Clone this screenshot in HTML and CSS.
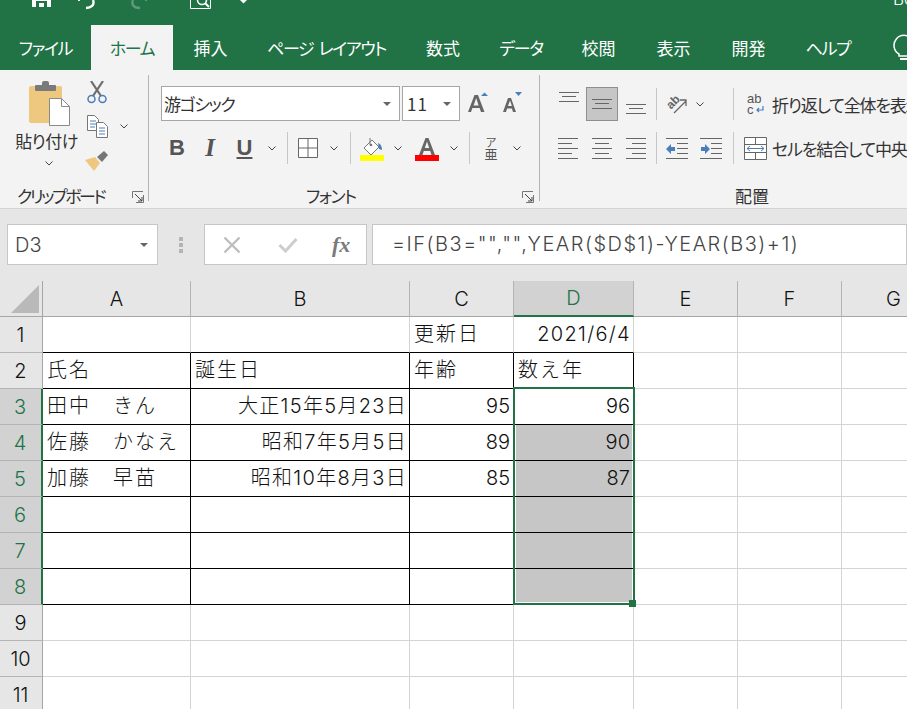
FILE: index.html
```html
<!DOCTYPE html>
<html lang="ja">
<head>
<meta charset="utf-8">
<title>Excel</title>
<link rel="stylesheet" href="styles.css">
</head>
<body>
<div class="app">
  <div class="titlebar">
    <svg class="q q-save" width="19" height="25" viewBox="0 0 19 25"><path d="M0 0h19v7H0z" fill="#fff"/><path d="M4 1h11v6h-3V3H7v4H4z" fill="#217346"/></svg>
    <svg class="q q-undo" width="18" height="25" viewBox="0 0 18 25"><path d="M15 0c2 5-2 8-7 8" fill="none" stroke="#fff" stroke-width="2.400"/><path d="M0 0h2" stroke="#fff" stroke-width="2"/></svg>
    <svg class="q q-redo" width="18" height="25" viewBox="0 0 18 25"><path d="M3 0c-2 5 1 8 7 8" fill="none" stroke="#5d9a7c" stroke-width="2.400"/><path d="M15 0h2" stroke="#5d9a7c" stroke-width="2"/></svg>
    <svg class="q q-prev" width="21" height="25" viewBox="0 0 21 25"><path d="M.5 0v8.500h20V0" fill="none" stroke="#fff"/><circle cx="12" cy="0" r="4.500" fill="none" stroke="#fff" stroke-width="1.600"/><path d="M15 3l4 4" stroke="#fff" stroke-width="2"/></svg>
    <svg class="q q-drop" width="8" height="25" viewBox="0 0 8 25"><path d="M0 0h7L3.500 3.500z" fill="#fff"/></svg>
    <span class="doc">Book1 - Excel</span>
  </div>

  <div class="tabs">
    <div class="tab kana">ファイル</div>
    <div class="tab kana active">ホーム</div>
    <div class="tab">挿入</div>
    <div class="tab kana gapped">ページ レイアウト</div>
    <div class="tab">数式</div>
    <div class="tab kana">データ</div>
    <div class="tab">校閲</div>
    <div class="tab">表示</div>
    <div class="tab">開発</div>
    <div class="tab kana">ヘルプ</div>
    <svg class="bulb" width="37" height="45" viewBox="0 0 37 45"><path d="M29 29A10 10 0 1 1 39 29V31H29Z" fill="none" stroke="#fff" stroke-width="1.500"/><path d="M30 34H38" stroke="#fff" stroke-width="2"/></svg>
  </div>

  <div class="ribbon">
    <section class="group g-clip">
      <div class="clip-body">
        <div class="paste">
          <svg width="41" height="45" viewBox="0 0 41 45"><rect x="0" y="5" width="33" height="37" rx="2" fill="#edc87e"/><rect x="6" y="4" width="21" height="6" rx="1" fill="#7a7a7a"/><rect x="13" y="0" width="7" height="6" rx="2" fill="#7a7a7a"/><path d="M20.500 17.500h12l8 8v19h-20z" fill="#fff" stroke="#8a8a8a"/><path d="M32.500 17.500v8h8" fill="none" stroke="#8a8a8a"/></svg>
          <div class="paste-label">貼り付け</div>
          <svg class="chev paste-chev" width="8" height="5" viewBox="0 0 8 5"><path d="M.5.5L4 4 7.500.5" fill="none" stroke="#444"/></svg>
        </div>
        <div class="clip-tools">
          <svg width="20" height="23" viewBox="0 0 20 23"><path d="M4 0l10 15M16 0L6 15" stroke="#6d6d6d" stroke-width="2.200" fill="none"/><circle cx="4.500" cy="18" r="3.500" fill="none" stroke="#4a7ebb" stroke-width="1.500"/><circle cx="15.500" cy="18" r="3.500" fill="none" stroke="#4a7ebb" stroke-width="1.500"/></svg>
          <span></span>
          <svg width="21" height="23" viewBox="0 0 21 23"><path d="M.5.5h7l4 4v11H.5z" fill="#fff" stroke="#777"/><path d="M9.500 7.500h7l4 4v11h-11z" fill="#fff" stroke="#777"/><path d="M3 6h6M3 9h6M3 12h5" stroke="#4a7ebb"/><path d="M12 13h6M12 16h6M12 19h6" stroke="#4a7ebb"/></svg>
          <svg class="chev" width="8" height="5" viewBox="0 0 8 5"><path d="M.5.5L4 4 7.500.5" fill="none" stroke="#444"/></svg>
          <svg width="24" height="21" viewBox="0 0 24 21"><path d="M0 10l10-3 5 6-6 8z" fill="#edc87e"/><path d="M12 7l7-6 4 4-6 7z" fill="#767676"/></svg>
          <span></span>
        </div>
      </div>
      <div class="glabel"><span class="gname gn-clip">クリップボード</span>
        <svg class="launcher l-clip" width="12" height="12" viewBox="0 0 12 12"><path d="M.5 7V.5H11M11.500 4v7.500H4" fill="none" stroke="#777"/><path d="M3 3l7 7M10 6v4H6" fill="none" stroke="#444"/></svg>
      </div>
    </section>

    <section class="group g-font">
      <div class="font-row1">
        <div class="combo font-name"><span>游ゴシック</span><i class="tri"></i></div>
        <div class="combo font-size"><span>11</span><i class="tri"></i></div>
        <svg width="36" height="35" viewBox="0 0 36 35"><path class="a-shape" d="M8 26L14.500 9h3.500L24.500 26h-3.500l-1.400-4h-7.200L11 26zM13.600 19.500h5L16.200 12z"/><path d="M21 10l3.500-3.500 3.500 3.500z" fill="#4a7ebb"/></svg>
        <svg width="34" height="35" viewBox="0 0 34 35"><path class="a-shape" d="M7 26L12 12h3l5 14h-3l-1.100-3.500h-4.800L10 26zM12 20h3.900L14 14.500z"/><path d="M19 6h7l-3.500 4z" fill="#4a7ebb"/></svg>
      </div>
      <div class="font-row2">
        <span class="fmt f-b">B</span>
        <span class="fmt f-i">I</span>
        <span class="fmt f-u">U</span>
        <svg class="chev" width="8" height="5" viewBox="0 0 8 5"><path d="M.5.5L4 4 7.500.5" fill="none" stroke="#444"/></svg>
        <i class="sep"></i>
        <svg width="20" height="20" viewBox="0 0 20 20"><path d="M.5.500h19v19H.5zM10 .5v19M.5 10h19" fill="#fff" stroke="#666"/></svg>
        <svg class="chev" width="8" height="5" viewBox="0 0 8 5"><path d="M.5.5L4 4 7.500.5" fill="none" stroke="#444"/></svg>
        <i class="sep"></i>
        <svg class="low" width="25" height="25" viewBox="0 0 25 25"><path d="M4 11l8-8 7 7-8 8z" fill="#fff" stroke="#777"/><path d="M10 1v7" stroke="#777"/><circle cx="11" cy="8" r="1.300" fill="#777"/><path d="M18 6c3 1 4 4 4 7l-3-1z" fill="#4a7ebb"/><rect y="18" width="24" height="6" fill="#ffff00"/></svg>
        <svg class="chev" width="8" height="5" viewBox="0 0 8 5"><path d="M.5.5L4 4 7.500.5" fill="none" stroke="#444"/></svg>
        <svg class="low" width="24" height="25" viewBox="0 0 24 25"><path class="a-shape" d="M4 18L10.500 1h3L20 18h-3.500l-1.300-4h-6.400L7.500 18zM9.800 11h4.400L12 4.500z"/><rect y="18" width="24" height="6" fill="#ff0000"/></svg>
        <svg class="chev" width="8" height="5" viewBox="0 0 8 5"><path d="M.5.5L4 4 7.500.5" fill="none" stroke="#444"/></svg>
        <i class="sep"></i>
        <span class="phon"><small>ア</small><b>亜</b></span>
        <svg class="chev" width="8" height="5" viewBox="0 0 8 5"><path d="M.5.5L4 4 7.500.5" fill="none" stroke="#444"/></svg>
      </div>
      <div class="glabel"><span class="gname gn-font">フォント</span>
        <svg class="launcher l-font" width="12" height="12" viewBox="0 0 12 12"><path d="M.5 7V.5H11M11.500 4v7.500H4" fill="none" stroke="#777"/><path d="M3 3l7 7M10 6v4H6" fill="none" stroke="#444"/></svg>
      </div>
    </section>

    <section class="group g-align">
      <div class="align-row1">
        <svg width="20" height="10" viewBox="0 0 20 10" class="a-top"><path d="M0 .5h20M3 4.500h14M0 9.500h20" stroke="#666"/></svg>
        <div class="a-on"><svg width="20" height="10" viewBox="0 0 20 10"><path d="M0 .5h20M3 4.500h14M0 9.500h20" stroke="#666"/></svg></div>
        <svg width="20" height="10" viewBox="0 0 20 10" class="a-bot"><path d="M0 .5h20M3 4.500h14M0 9.500h20" stroke="#666"/></svg>
        <i class="sep short"></i>
        <svg width="22" height="21" viewBox="0 0 22 21"><text class="orient" x="0" y="12" transform="rotate(-45 7 8)">ab</text><path d="M8 19L20 7M14 6h6v6" fill="none" stroke="#666" stroke-width="1.300"/></svg>
        <svg class="chev" width="8" height="5" viewBox="0 0 8 5"><path d="M.5.5L4 4 7.500.5" fill="none" stroke="#444"/></svg>
        <span></span>
        <i class="sep tall"></i>
        <span></span>
        <svg width="20" height="22" viewBox="0 0 20 22"><text class="wrapt" x="1" y="10">ab</text><text class="wrapt" x="1" y="21">c</text><path d="M17 13v4h-6M13 15l-2 2 2 2" fill="none" stroke="#4a7ebb" stroke-width="1.200"/></svg>
        <span class="a-text">折り返して全体を表示する</span>
      </div>
      <div class="align-row2">
        <svg width="20" height="21" viewBox="0 0 20 21"><path d="M0 .5h20M0 5.500h14M0 10.500h20M0 15.500h14M0 20.500h20" stroke="#666"/></svg>
        <svg width="20" height="21" viewBox="0 0 20 21"><path d="M0 .5h20M3 5.500h14M0 10.500h20M3 15.500h14M0 20.500h20" stroke="#666"/></svg>
        <svg width="20" height="21" viewBox="0 0 20 21"><path d="M0 .5h20M6 5.500h14M0 10.500h20M6 15.500h14M0 20.500h20" stroke="#666"/></svg>
        <i class="sep"></i>
        <svg width="22" height="21" viewBox="0 0 22 21"><path d="M0 .5h22M11 5.500h11M11 10.500h11M11 15.500h11M0 20.500h22" stroke="#666"/><path d="M0 11l5-5v3h4v4H5v3z" fill="#4a7ebb"/></svg>
        <svg width="22" height="21" viewBox="0 0 22 21"><path d="M0 .5h22M11 5.500h11M11 10.500h11M11 15.500h11M0 20.500h22" stroke="#666"/><path d="M10 11L5 6v3H1v4h4v3z" fill="#4a7ebb"/></svg>
        <i class="sep"></i>
        <span></span>
        <svg width="23" height="23" viewBox="0 0 23 23"><path d="M.5.5h22v22H.5z" fill="#fff" stroke="#666"/><path d="M.5 7.500h22M.5 15.500h22M11.500 .5v7M11.500 15.500v7" stroke="#666"/><path d="M3 11.500h17M6 9l-3 2.500L6 14M17 9l3 2.500L17 14" fill="none" stroke="#4a7ebb"/></svg>
        <span class="a-text">セルを結合して中央揃え</span>
      </div>
      <div class="glabel"><span class="gname gn-align">配置</span></div>
    </section>
  </div>

  <div class="formula">
    <div class="namebox"><span>D3</span><i class="tri"></i></div>
    <div class="grip"><i></i><i></i><i></i></div>
    <div class="fnbox">
      <svg width="18" height="18" viewBox="0 0 18 18"><path d="M1.500 1.500l15 15M16.500 1.500l-15 15" stroke="#bdbdbd" stroke-width="2.400"/></svg>
      <svg width="20" height="16" viewBox="0 0 20 16"><path d="M1.500 8l6 6L18.500 2" fill="none" stroke="#cdcdcd" stroke-width="3"/></svg>
      <span class="fx">fx</span>
    </div>
    <div class="fbox">=IF(B3="","",YEAR($D$1)-YEAR(B3)+1)</div>
  </div>

  <div class="sheet">
    <div class="hd corner"><svg width="42" height="35" viewBox="0 0 42 35"><path d="M39 4v28H11z" fill="#b9b9b9"/></svg></div>
    <div class="hd col">A</div><div class="hd col">B</div><div class="hd col">C</div><div class="hd col on">D</div><div class="hd col">E</div><div class="hd col">F</div><div class="hd col">G</div>

    <div class="hd row">1</div>
    <div class="c bb"></div><div class="c bb"></div><div class="c bb">更新日</div><div class="c bb r d">2021/6/4</div><div class="c"></div><div class="c"></div><div class="c"></div>

    <div class="hd row">2</div>
    <div class="c k">氏名</div><div class="c k">誕生日</div><div class="c k">年齢</div><div class="c k">数え年</div><div class="c"></div><div class="c"></div><div class="c"></div>

    <div class="hd row on">3</div>
    <div class="c k">田中　きん</div><div class="c k r d">大正15年5月23日</div><div class="c k r">95</div><div class="c k r">96</div><div class="c"></div><div class="c"></div><div class="c"></div>

    <div class="hd row on">4</div>
    <div class="c k">佐藤　かなえ</div><div class="c k r d">昭和7年5月5日</div><div class="c k r">89</div><div class="c k r s">90</div><div class="c"></div><div class="c"></div><div class="c"></div>

    <div class="hd row on">5</div>
    <div class="c k">加藤　早苗</div><div class="c k r d">昭和10年8月3日</div><div class="c k r">85</div><div class="c k r s">87</div><div class="c"></div><div class="c"></div><div class="c"></div>

    <div class="hd row on">6</div>
    <div class="c k"></div><div class="c k"></div><div class="c k"></div><div class="c k s"></div><div class="c"></div><div class="c"></div><div class="c"></div>

    <div class="hd row on">7</div>
    <div class="c k"></div><div class="c k"></div><div class="c k"></div><div class="c k s"></div><div class="c"></div><div class="c"></div><div class="c"></div>

    <div class="hd row on">8</div>
    <div class="c k"></div><div class="c k"></div><div class="c k"></div><div class="c k s last"></div><div class="c"></div><div class="c"></div><div class="c"></div>

    <div class="hd row">9</div>
    <div class="c"></div><div class="c"></div><div class="c"></div><div class="c"></div><div class="c"></div><div class="c"></div><div class="c"></div>

    <div class="hd row">10</div>
    <div class="c"></div><div class="c"></div><div class="c"></div><div class="c"></div><div class="c"></div><div class="c"></div><div class="c"></div>

    <div class="hd row">11</div>
    <div class="c"></div><div class="c"></div><div class="c"></div><div class="c"></div><div class="c"></div><div class="c"></div><div class="c"></div>

    <div class="selection"><i class="handle"></i></div>
  </div>
</div>
</body>
</html>
```

FILE: styles.css
```css
* { box-sizing: border-box; }
html, body { margin: 0; padding: 0; height: 709px; overflow: hidden; background: #fff; }
body { font-family: Inter, "Noto Sans CJK JP", "Noto Sans", sans-serif; font-weight: 300; color: #000; }
i { display: block; font-style: normal; }
svg { display: block; }
.app { width: 907px; height: 709px; overflow: hidden; display: flex; flex-direction: column; }

/* title bar */
.titlebar { height: 25px; flex: none; background: #217346; display: flex; padding-left: 32px; overflow: hidden; }
.titlebar > * { flex: none; }
.q-undo { margin-left: 27px; }
.q-redo { margin-left: 34px; }
.q-prev { margin-left: 42px; }
.q-drop { margin-left: 29px; }
.doc { margin-left: 645px; margin-top: -13px; font-size: 17px; line-height: 24px; height: 24px; color: #fff; white-space: nowrap; }

/* tabs */
.tabs { height: 45px; flex: none; background: #217346; display: grid; grid-template-columns: 91px 82px 75px 157px 76px 80px 75px 75px 75px 84px 37px; }
.tab { color: #fff; font-family: "Noto Sans CJK JP", sans-serif; font-weight: 400; font-size: 17px; line-height: 45px; text-align: center; font-feature-settings: "palt"; white-space: nowrap; }
.tab.kana { letter-spacing: -1.400px; }
.tab.gapped { word-spacing: 3px; }
.tab.active { background: #f3f3f3; color: #217346; }

/* ribbon */
.ribbon { height: 139px; flex: none; background: #f3f3f3; border-bottom: 1px solid #d4d4d4; display: flex; padding-top: 5px; color: #444; overflow: hidden; font-family: "Noto Sans CJK JP", sans-serif; font-weight: 400; }
.group { height: 126px; border-right: 1px solid #b4b4b4; position: relative; display: flex; flex-direction: column; flex: none; }
.g-clip { width: 149px; }
.g-font { width: 391px; padding: 11px 0 0 12px; }
.g-align { flex: 1; border-right: 0; padding: 12px 0 0 11px; }
.glabel { position: absolute; left: 0; right: 0; top: 111px; height: 20px; font-size: 17px; line-height: 20px; color: #333; font-feature-settings: "palt"; white-space: nowrap; }
.gname { position: absolute; top: 0; }
.gn-clip { left: 17px; letter-spacing: -2.500px; }
.gn-font { left: 157px; letter-spacing: -1.500px; }
.gn-align { left: 195px; }
.launcher { position: absolute; top: 5px; }
.l-clip { left: 132px; }
.l-font { left: 373px; }

.clip-body { display: flex; }
.paste { width: 82px; padding: 6px 0 0 16px; display: flex; flex-direction: column; align-items: center; flex: none; }
.paste-label { font-size: 17px; line-height: 22px; margin-top: 4px; margin-left: -5px; letter-spacing: -.5px; color: #333; font-feature-settings: "palt"; white-space: nowrap; }
.paste-chev { margin-top: 9px; }
.clip-tools { display: grid; grid-template-columns: 30px 24px; grid-auto-rows: 34px; place-items: center; }

.combo { height: 35px; background: #fff; border: 1px solid #a6a6a6; display: flex; align-items: center; justify-content: space-between; padding: 0 8px 0 2px; font-size: 17px; color: #333; }
.tri { width: 0; height: 0; border-left: 4px solid transparent; border-right: 4px solid transparent; border-top: 4px solid #666; }
.font-row1 { display: grid; grid-template-columns: 239px 60px 36px 34px; }
.font-size { margin-left: 2px; padding-left: 4px; }
.font-size span { letter-spacing: 1px; }
.font-name span { font-feature-settings: "palt"; letter-spacing: -1.400px; }
.font-row2 { display: grid; grid-template-columns: 32px 34px 35px 20px 10px 32px 20px 12px 32px 20px 38px 15px 16px 28px 24px; height: 36px; margin-top: 9px; align-items: center; justify-items: center; }
.low { margin-top: 3px; }
.a-shape { fill: #666; fill-rule: evenodd; }
.fmt { color: #555; font-family: "Liberation Sans", sans-serif; font-size: 22px; line-height: 24px; }
.f-b { font-weight: 700; }
.f-i { font-family: "Liberation Serif", serif; font-style: italic; font-weight: 700; font-size: 25px; }
.f-u { text-decoration: underline; text-underline-offset: 2px; font-weight: 700; }
.sep { width: 1px; height: 32px; background: #c6c6c6; }
.phon { display: flex; flex-direction: column; align-items: center; line-height: 1; color: #555; }
.phon small { font-size: 11px; line-height: 10px; }
.phon b { font-weight: 400; font-size: 13px; line-height: 13px; }

.align-row1, .align-row2 { display: grid; align-items: center; justify-items: center; }
.align-row1 { height: 34px; grid-template-columns: 35px 32px 36px 4px 38px 8px 27px 4px 4px 33px auto; }
.align-row2 { height: 36px; margin-top: 9px; grid-template-columns: 34px 34px 34px 6px 36px 32px 12px 0 33px auto; }
.a-top { align-self: start; margin-top: 5px; }
.a-bot { align-self: end; margin-bottom: 7px; }
.a-on { width: 32px; height: 34px; background: #c6c6c6; border: 1px solid #8f8f8f; display: flex; align-items: center; justify-content: center; }
.orient { font-family: "Liberation Sans", sans-serif; font-size: 12px; font-weight: 700; fill: #666; }
.wrapt { font-family: "Liberation Sans", sans-serif; font-size: 13px; fill: #555; }
.a-text { font-size: 17px; color: #333; white-space: nowrap; justify-self: start; font-feature-settings: "palt"; letter-spacing: -1.200px; }
.short { height: 32px; }
.tall { height: 32px; background: #c6c6c6; }

/* formula bar */
.formula { height: 72px; flex: none; background: #e6e6e6; padding: 15px 0 16px 7px; display: flex; }
.namebox { width: 151px; background: #fff; border: 1px solid #c6c6c6; display: flex; align-items: center; justify-content: space-between; padding: 0 9px 0 7px; font-size: 20px; color: #444; }
.grip { width: 46px; display: flex; flex-direction: column; align-items: center; gap: 2px; padding-top: 13px; }
.grip i { width: 4px; height: 4px; background: #b4b4b4; }
.fnbox { width: 163px; background: #fff; border: 1px solid #c6c6c6; display: flex; align-items: center; padding-left: 18px; gap: 37px; }
.fx { font-family: "Liberation Serif", serif; font-style: italic; font-weight: 700; font-size: 22px; color: #7a7a7a; margin-left: -3px; }
.fbox { width: 535px; margin-left: 5px; background: #fff; border: 1px solid #c6c6c6; padding-left: 19px; font-size: 20px; line-height: 38px; color: #444; white-space: nowrap; letter-spacing: 1.500px; }

/* sheet */
.sheet { flex: none; display: grid; grid-template-columns: 43px 148px 219px 104px 120px 104px 104px 104px; grid-auto-rows: 36px; width: 946px; position: relative; }
.hd { background: #e6e6e6; border-right: 1px solid #b4b4b4; border-bottom: 1px solid #b4b4b4; display: flex; align-items: center; justify-content: center; font-size: 20px; color: #111; }
.corner { border-right-color: #a6a6a6; border-bottom-color: #a6a6a6; }
.col { border-bottom-color: #a6a6a6; }
.row { border-right-color: #a6a6a6; padding-right: 1px; }
.hd.on { background: #d2d2d2; color: #217346; }
.col.on { border-bottom: 2px solid #217346; }
.row.on { border-right: 2px solid #217346; }
.c { border-right: 1px solid #d4d4d4; border-bottom: 1px solid #d4d4d4; font-size: 20px; line-height: 35px; padding: 0 3px 0 4px; white-space: nowrap; color: #111; letter-spacing: 2px; }
.r { text-align: right; letter-spacing: 0; }
.d { letter-spacing: 1.300px; padding-right: 2px; }
.bb { border-bottom-color: #000; }
.k { border-right-color: #000; border-bottom-color: #000; }
.s { background: #c6c6c6; box-shadow: inset 2px 0 #fff, inset -1px 0 #fff; }
.last { box-shadow: inset 2px 0 #fff, inset -1px 0 #fff, inset 0 -2px #fff; }
.selection { position: absolute; left: 513px; top: 106px; width: 122px; height: 218px; border: 2px solid #217346; }
.handle { position: absolute; right: -3px; bottom: -4px; width: 7px; height: 7px; background: #217346; }
```
